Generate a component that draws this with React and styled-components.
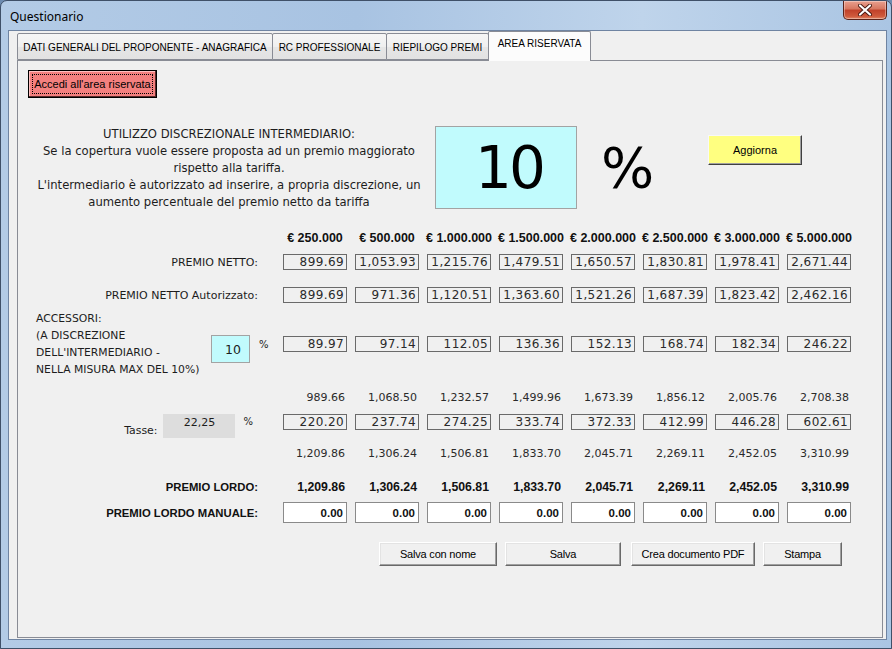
import React from 'react'
import styled, { createGlobalStyle } from 'styled-components'

const GlobalStyle = createGlobalStyle`
    html, body {
        margin: 0;
        padding: 0;
    }
    body {
        background: #6d8bb0;
        font-family: "DejaVu Sans", sans-serif;
        color: #1c1c1c;
    }
    * {
        box-sizing: border-box;
    }
`;

const Window = styled.div`
    width: 892px;
    height: 649px;
    display: flex;
    flex-direction: column;
    padding: 0 4px 8px 7px;
    border: 1px solid #3f5068;
    border-radius: 7px 7px 0 0;
    background: linear-gradient(90deg, #b3cbe6 0%, #a8c3e2 40%, #bfd4eb 72%, #aac5e3 100%);
    overflow: hidden;
`;

const TitleBar = styled.div`
    height: 29px;
    flex-shrink: 0;
    display: flex;
    justify-content: space-between;
    align-items: flex-start;
`;

const Title = styled.span`
    font-family: "Noto Sans", "Open Sans", sans-serif;
    font-size: 12px;
    line-height: 16px;
    color: #000;
    margin: 8px 0 0 2px;
`;

const CloseBtn = styled.div`
    width: 44px;
    height: 19px;
    border: 1px solid #5a2219;
    border-top: none;
    border-radius: 0 0 5px 5px;
    background: linear-gradient(#e9a08f 0%, #d7765f 45%, #c0412a 50%, #cf5a3c 85%, #e08a6a 100%);
    display: flex;
    align-items: center;
    justify-content: center;
    box-shadow: inset 0 0 0 1px rgba(255, 255, 255, 0.35);
`;

const Client = styled.div`
    flex: 1;
    display: flex;
    flex-direction: column;
    padding: 0 3px 1px 8px;
    background: #f0f0f0;
    border: 1px solid #6f84a2;
`;

const TabStrip = styled.div`
    height: 29px;
    flex-shrink: 0;
    display: flex;
    align-items: flex-end;
    position: relative;
    z-index: 1;
`;

const Tab = styled.div`
    width: ${p => p.$w}px;
    height: ${p => (p.$active ? 30 : 27)}px;
    margin-bottom: ${p => (p.$active ? -1 : 0)}px;
    margin-left: -1px;
    &:first-child {
        margin-left: 0;
    }
    border: 1px solid #898c95;
    border-bottom: ${p => (p.$active ? 'none' : '1px solid #898c95')};
    border-radius: 2px 2px 0 0;
    background: ${p => (p.$active ? '#fcfcfc' : 'linear-gradient(#f6f6f6, #efefef 50%, #e6e6e6 51%, #e2e2e2)')};
    font-family: "Liberation Sans", Arial, sans-serif;
    font-size: 10px;
    color: #000;
    display: flex;
    justify-content: center;
    padding-top: ${p => (p.$active ? 6 : 8)}px;
    white-space: nowrap;
`;

const Page = styled.div`
    flex: 1;
    border: 1px solid #898c95;
    background: #f0f0f0;
    display: flex;
    flex-direction: column;
`;

const AccessButton = styled.button`
    align-self: flex-start;
    margin: 9px 0 0 10px;
    width: 129px;
    height: 28px;
    background: #f4807f;
    border: 1px solid #000;
    box-shadow: inset -1px -1px 0 #5a2a2a, inset 1px 1px 0 #ffc0c0;
    outline: 1px dotted #000;
    outline-offset: -5px;
    font-family: "Liberation Sans", Arial, sans-serif;
    font-size: 11px;
    color: #000;
    padding: 0;
`;

const InfoRow = styled.div`
    display: flex;
    margin-top: 28px;
    height: 84px;
`;

const InfoText = styled.div`
    width: 400px;
    margin-left: 11px;
    text-align: center;
    font-size: 11.6px;
    line-height: 17px;
`;

const BigBox = styled.div`
    width: 142px;
    height: 83px;
    margin-left: 6px;
    background: #c1fbfd;
    border: 1px solid #a3a3a3;
    display: flex;
    align-items: center;
    justify-content: center;
    padding-left: 6px;
    font-size: 58px;
    letter-spacing: -3px;
    color: #000;
`;

const BigPercent = styled.div`
    width: 60px;
    margin-left: 24px;
    height: 83px;
    display: flex;
    align-items: center;
    font-size: 56px;
    color: #000;
`;

const YellowButton = styled.button`
    width: 94px;
    height: 30px;
    margin: 9px 0 0 47px;
    background: #ffff80;
    border: 1px solid;
    border-color: #f8f8f8 #404040 #404040 #f8f8f8;
    box-shadow: inset -1px -1px 0 #a0a0a0;
    font-family: "Liberation Sans", Arial, sans-serif;
    font-size: 11px;
    color: #000;
    padding: 0;
`;

const Row = styled.div`
    display: grid;
    grid-template-columns: 257px repeat(8, 64px);
    column-gap: 8px;
    height: ${p => p.$h}px;
    margin-top: ${p => p.$mt}px;
    align-items: ${p => p.$align || 'center'};
`;

const HeadCell = styled.div`
    display: flex;
    justify-content: center;
    white-space: nowrap;
    font-family: "Liberation Sans", Arial, sans-serif;
    font-weight: 700;
    font-size: 12.5px;
    color: #111;
`;

const Label = styled.div`
    text-align: right;
    padding-right: 17px;
    font-size: 11px;
    font-weight: ${p => (p.$bold ? 700 : 400)};
    font-family: ${p => (p.$bold ? '"Liberation Sans", Arial, sans-serif' : '"DejaVu Sans", sans-serif')};
    ${p => p.$bold && 'font-size: 11.3px; color: #111;'}
    white-space: nowrap;
`;

const ValueBox = styled.div`
    height: 16px;
    border: 1px solid #6a6a6a;
    text-align: right;
    padding-right: 2px;
    font-size: 12px;
    line-height: 14px;
    letter-spacing: 0.4px;
    color: #2a2a2a;
`;

const PlainValue = styled.div`
    text-align: right;
    padding-right: 2px;
    font-size: 11px;
    line-height: 16px;
    color: #2a2a2a;
    font-weight: ${p => (p.$bold ? 700 : 400)};
    ${p => p.$bold && 'font-family: "Liberation Sans", Arial, sans-serif; font-size: 12.3px; color: #111;'}
`;

const ManualBox = styled.div`
    height: 21px;
    background: #fff;
    border: 1px solid #8a8a8a;
    display: flex;
    align-items: flex-end;
    justify-content: flex-end;
    padding: 0 3px 3px 0;
    font-family: "Liberation Sans", Arial, sans-serif;
    font-weight: 700;
    font-size: 11.5px;
    color: #111;
`;

const AccCell = styled.div`
    display: flex;
    align-items: center;
    padding-left: 18px;
    height: 100%;
`;

const AccText = styled.div`
    width: 175px;
    font-size: 10.8px;
    line-height: 17px;
    white-space: nowrap;
`;

const SmallCyan = styled.div`
    width: 39px;
    height: 28px;
    margin-top: 10px;
    background: #c1fbfd;
    border: 1px solid #a3a3a3;
    display: flex;
    align-items: center;
    justify-content: flex-end;
    padding-right: 8px;
    font-size: 12.5px;
`;

const SmallPercent = styled.span`
    font-size: 10px;
    margin-left: ${p => p.$ml}px;
    align-self: ${p => p.$self || 'center'};
    margin-top: ${p => p.$mt || 0}px;
`;

const TaxCell = styled.div`
    display: flex;
    justify-content: flex-end;
    padding-right: 22px;
    height: 24px;
`;

const TaxLabel = styled.span`
    align-self: flex-end;
    margin-right: 6px;
    margin-bottom: 1px;
    font-size: 10.9px;
`;

const GreyBox = styled.div`
    width: 72px;
    height: 24px;
    background: #dddddd;
    text-align: center;
    font-size: 11px;
    line-height: 16px;
    padding-top: 1px;
`;

const ButtonRow = styled.div`
    display: flex;
    margin: 19px 0 0 361px;
`;

const WinButton = styled.button`
    width: ${p => p.$w}px;
    height: 24px;
    margin-left: ${p => p.$ml || 0}px;
    background: #f0f0f0;
    border: 1px solid;
    border-color: #ffffff #696969 #696969 #ffffff;
    box-shadow: inset -1px -1px 0 #a0a0a0, inset 1px 1px 0 #e3e3e3;
    font-family: "Liberation Sans", Arial, sans-serif;
    font-size: 11px;
    letter-spacing: -0.2px;
    color: #000;
    padding: 0;
`;

const headers = ['€ 250.000', '€ 500.000', '€ 1.000.000', '€ 1.500.000', '€ 2.000.000', '€ 2.500.000', '€ 3.000.000', '€ 5.000.000']
const netto = ['899.69', '1,053.93', '1,215.76', '1,479.51', '1,650.57', '1,830.81', '1,978.41', '2,671.44']
const autorizzato = ['899.69', '971.36', '1,120.51', '1,363.60', '1,521.26', '1,687.39', '1,823.42', '2,462.16']
const accessori = ['89.97', '97.14', '112.05', '136.36', '152.13', '168.74', '182.34', '246.22']
const imponibile = ['989.66', '1,068.50', '1,232.57', '1,499.96', '1,673.39', '1,856.12', '2,005.76', '2,708.38']
const tasse = ['220.20', '237.74', '274.25', '333.74', '372.33', '412.99', '446.28', '602.61']
const lordo = ['1,209.86', '1,306.24', '1,506.81', '1,833.70', '2,045.71', '2,269.11', '2,452.05', '3,310.99']

const App = () => {
    return (
        <>
            <GlobalStyle />
            <Window>
                <TitleBar>
                    <Title>Questionario</Title>
                    <CloseBtn>
                        <svg width="14" height="12" viewBox="0 0 14 12">
                            <path d="M2 1.5 L12 10.5 M12 1.5 L2 10.5" stroke="#4a1a12" strokeWidth="4" strokeLinecap="round" />
                            <path d="M2 1.5 L12 10.5 M12 1.5 L2 10.5" stroke="#ffffff" strokeWidth="2.2" strokeLinecap="round" />
                        </svg>
                    </CloseBtn>
                </TitleBar>
                <Client>
                    <TabStrip>
                        <Tab $w={256}>DATI GENERALI DEL PROPONENTE - ANAGRAFICA</Tab>
                        <Tab $w={115}>RC PROFESSIONALE</Tab>
                        <Tab $w={103}>RIEPILOGO PREMI</Tab>
                        <Tab $w={103} $active>AREA RISERVATA</Tab>
                    </TabStrip>
                    <Page>
                        <AccessButton>Accedi all'area riservata</AccessButton>

                        <InfoRow>
                            <InfoText>
                                UTILIZZO DISCREZIONALE INTERMEDIARIO:<br />
                                Se la copertura vuole essere proposta ad un premio maggiorato<br />
                                rispetto alla tariffa.<br />
                                L'intermediario è autorizzato ad inserire, a propria discrezione, un<br />
                                aumento percentuale del premio netto da tariffa
                            </InfoText>
                            <BigBox>10</BigBox>
                            <BigPercent>%</BigPercent>
                            <YellowButton>Aggiorna</YellowButton>
                        </InfoRow>

                        <Row $h={16} $mt={20}>
                            <div />
                            {headers.map(h => <HeadCell key={h}>{h}</HeadCell>)}
                        </Row>

                        <Row $h={16} $mt={8}>
                            <Label>PREMIO NETTO:</Label>
                            {netto.map((v, i) => <ValueBox key={i}>{v}</ValueBox>)}
                        </Row>

                        <Row $h={16} $mt={17}>
                            <Label>PREMIO NETTO Autorizzato:</Label>
                            {autorizzato.map((v, i) => <ValueBox key={i}>{v}</ValueBox>)}
                        </Row>

                        <Row $h={66} $mt={7}>
                            <AccCell>
                                <AccText>
                                    ACCESSORI:<br />
                                    (A DISCREZIONE<br />
                                    DELL'INTERMEDIARIO -<br />
                                    NELLA MISURA MAX DEL 10%)
                                </AccText>
                                <SmallCyan>10</SmallCyan>
                                <SmallPercent $ml={9}>%</SmallPercent>
                            </AccCell>
                            {accessori.map((v, i) => <ValueBox key={i}>{v}</ValueBox>)}
                        </Row>

                        <Row $h={16} $mt={14}>
                            <div />
                            {imponibile.map((v, i) => <PlainValue key={i}>{v}</PlainValue>)}
                        </Row>

                        <Row $h={24} $mt={8} $align="start">
                            <TaxCell>
                                <TaxLabel>Tasse:</TaxLabel>
                                <GreyBox>22,25</GreyBox>
                                <SmallPercent $ml={8} $self="flex-start" $mt={2}>%</SmallPercent>
                            </TaxCell>
                            {tasse.map((v, i) => <ValueBox key={i}>{v}</ValueBox>)}
                        </Row>

                        <Row $h={16} $mt={8}>
                            <div />
                            {lordo.map((v, i) => <PlainValue key={i}>{v}</PlainValue>)}
                        </Row>

                        <Row $h={16} $mt={17}>
                            <Label $bold>PREMIO LORDO:</Label>
                            {lordo.map((v, i) => <PlainValue key={i} $bold>{v}</PlainValue>)}
                        </Row>

                        <Row $h={21} $mt={7}>
                            <Label $bold>PREMIO LORDO MANUALE:</Label>
                            {lordo.map((v, i) => <ManualBox key={i}>0.00</ManualBox>)}
                        </Row>

                        <ButtonRow>
                            <WinButton $w={118}>Salva con nome</WinButton>
                            <WinButton $w={116} $ml={8}>Salva</WinButton>
                            <WinButton $w={124} $ml={10}>Crea documento PDF</WinButton>
                            <WinButton $w={79} $ml={8}>Stampa</WinButton>
                        </ButtonRow>
                    </Page>
                </Client>
            </Window>
        </>
    )
}

export default App
